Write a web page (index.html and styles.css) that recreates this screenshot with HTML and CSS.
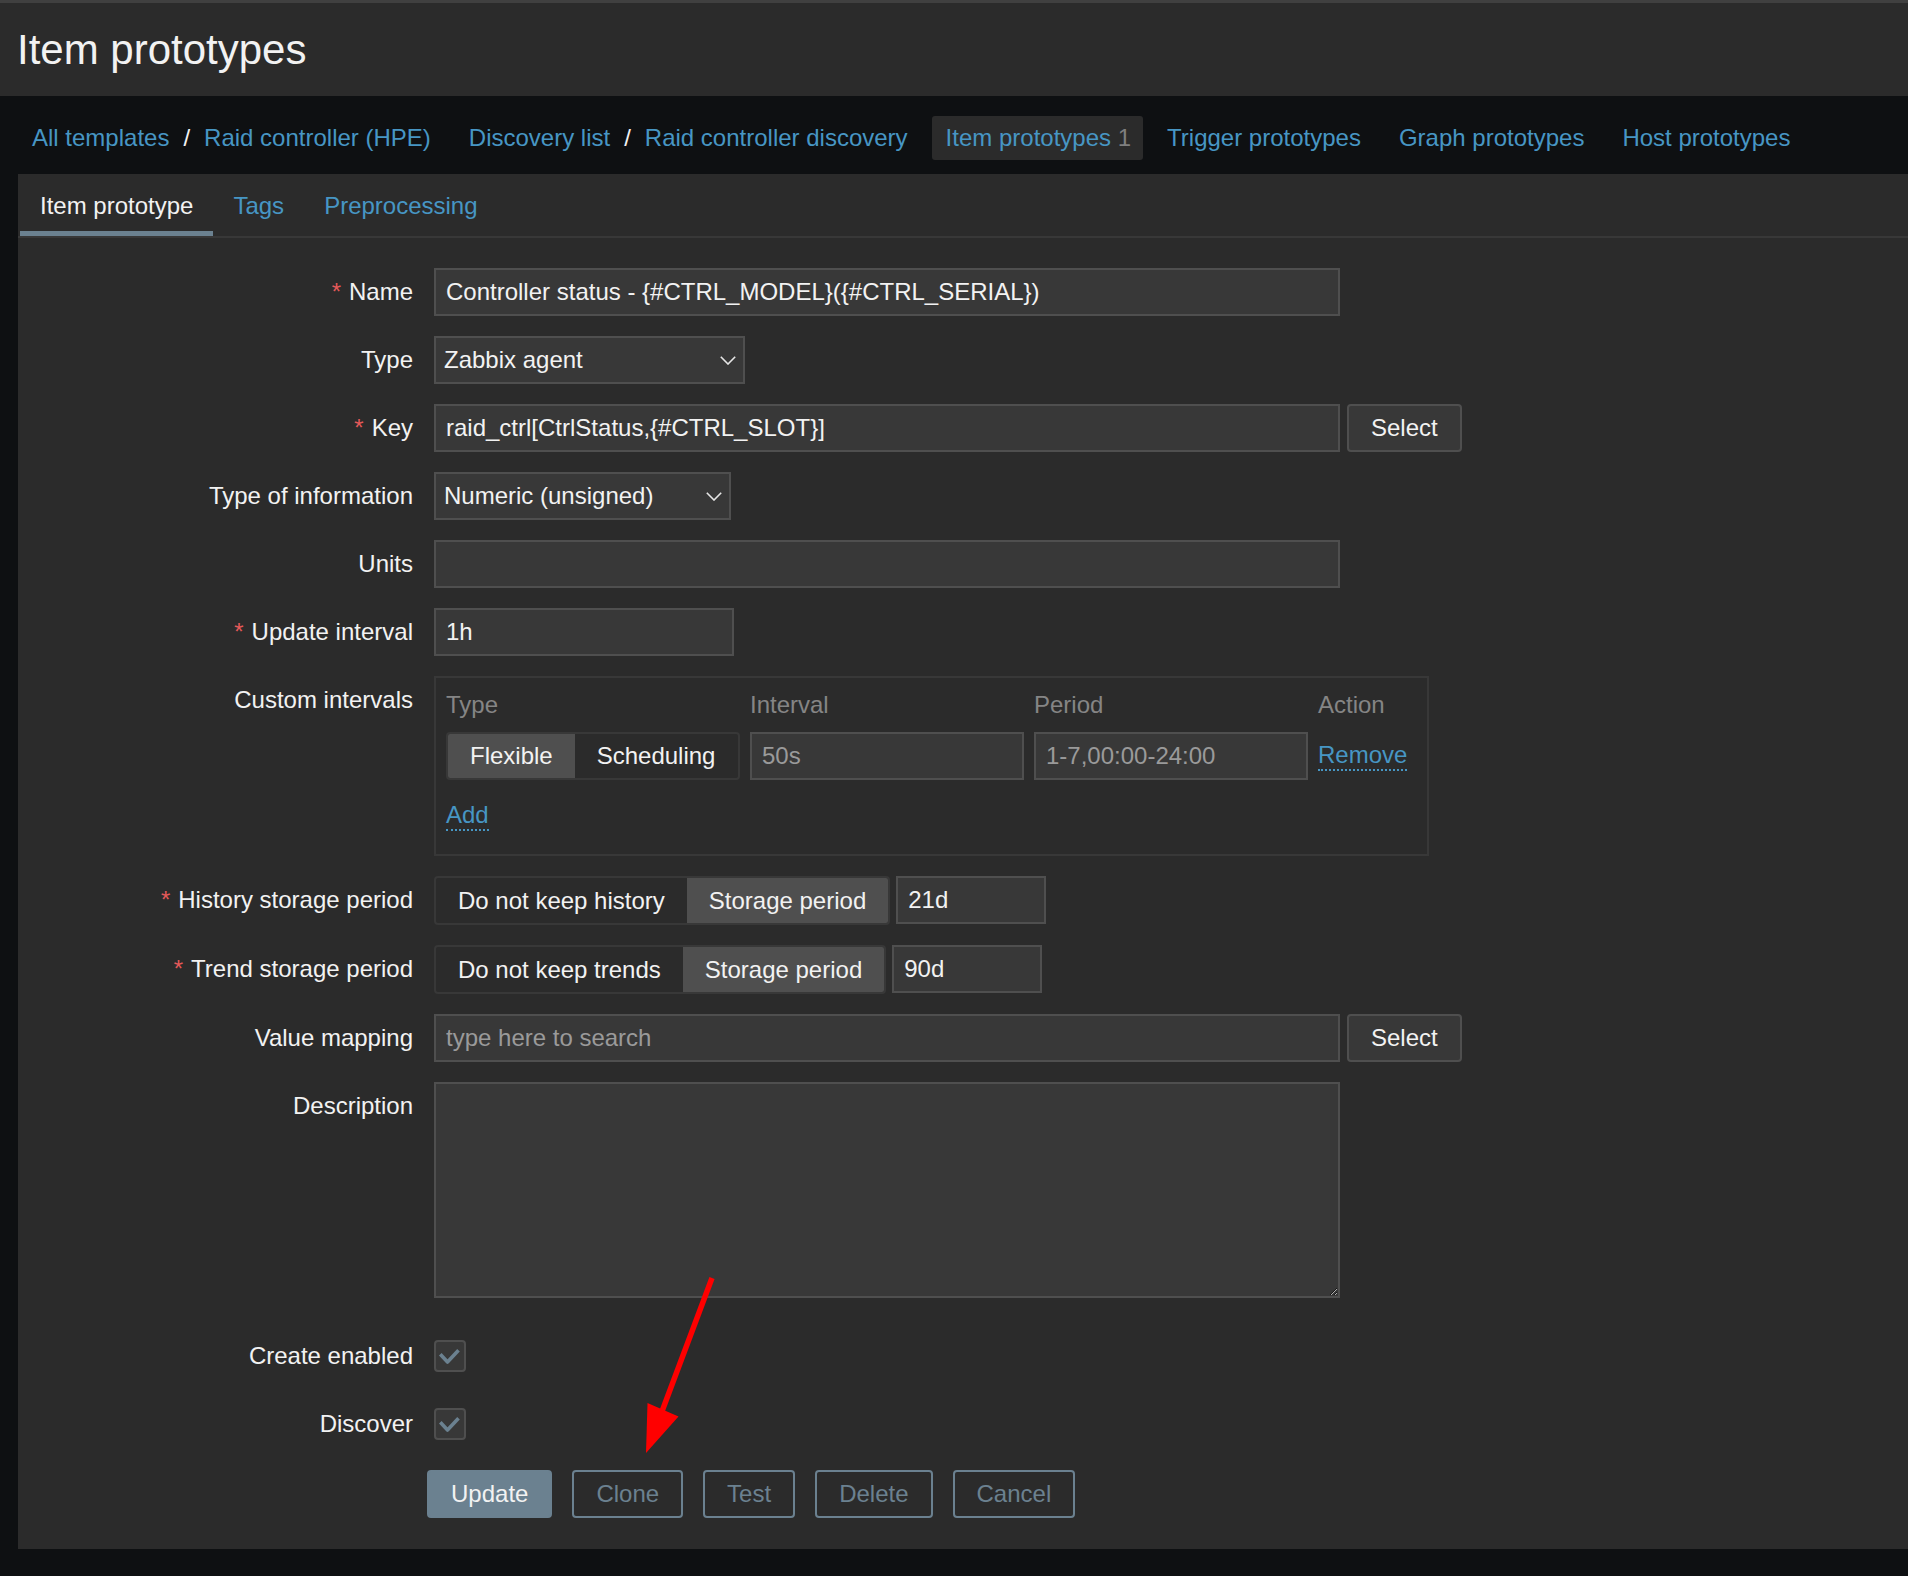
FILE: index.html
```html
<!DOCTYPE html>
<html lang="en">
<head>
<meta charset="utf-8">
<title>Item prototypes</title>
<link rel="stylesheet" href="styles.css">
</head>
<body>
<header class="page-header">
  <h1 class="page-title">Item prototypes</h1>
</header>

<nav class="crumbs">
  <ul class="crumb-list">
    <li><a href="#">All templates</a><span class="crumb-sep">/</span><a href="#">Raid controller (HPE)</a></li>
    <li><a href="#">Discovery list</a><span class="crumb-sep">/</span><a href="#">Raid controller discovery</a></li>
    <li class="is-current"><a href="#">Item prototypes</a> <span class="count">1</span></li>
    <li><a href="#">Trigger prototypes</a></li>
    <li><a href="#">Graph prototypes</a></li>
    <li><a href="#">Host prototypes</a></li>
  </ul>
</nav>

<main class="panel">
  <ul class="tabs">
    <li class="tab is-active">Item prototype</li>
    <li class="tab"><a href="#">Tags</a></li>
    <li class="tab"><a href="#">Preprocessing</a></li>
  </ul>

  <form class="form-grid">
    <div class="form-label required">Name</div>
    <div class="field"><input class="text-input w-wide" type="text" value="Controller status - {#CTRL_MODEL}({#CTRL_SERIAL})"></div>

    <div class="form-label">Type</div>
    <div class="field">
      <div class="select w-type"><span>Zabbix agent</span><svg viewBox="0 0 16 9" width="16" height="9"><polyline points="0.8,0.8 8,8 15.2,0.8" fill="none" stroke="#e6e6e6" stroke-width="1.6"/></svg></div>
    </div>

    <div class="form-label required">Key</div>
    <div class="field"><input class="text-input w-wide" type="text" value="raid_ctrl[CtrlStatus,{#CTRL_SLOT}]"><button type="button" class="btn-select">Select</button></div>

    <div class="form-label">Type of information</div>
    <div class="field">
      <div class="select w-info"><span>Numeric (unsigned)</span><svg viewBox="0 0 16 9" width="16" height="9"><polyline points="0.8,0.8 8,8 15.2,0.8" fill="none" stroke="#e6e6e6" stroke-width="1.6"/></svg></div>
    </div>

    <div class="form-label">Units</div>
    <div class="field"><input class="text-input w-wide" type="text" value=""></div>

    <div class="form-label required">Update interval</div>
    <div class="field"><input class="text-input w-interval" type="text" value="1h"></div>

    <div class="form-label">Custom intervals</div>
    <div class="field">
      <div class="intervals">
        <div class="iv-grid">
          <div class="iv-head">Type</div>
          <div class="iv-head">Interval</div>
          <div class="iv-head">Period</div>
          <div class="iv-head">Action</div>
          <div class="radio-list"><span class="on">Flexible</span><span>Scheduling</span></div>
          <input class="text-input w-full" type="text" placeholder="50s">
          <input class="text-input w-full" type="text" placeholder="1-7,00:00-24:00">
          <div><a href="#" class="dotted-link">Remove</a></div>
        </div>
        <div class="iv-add"><a href="#" class="dotted-link">Add</a></div>
      </div>
    </div>

    <div class="form-label required">History storage period</div>
    <div class="field field-tight">
      <div class="radio-list tall"><span>Do not keep history</span><span class="on">Storage period</span></div>
      <input class="text-input w-small" type="text" value="21d">
    </div>

    <div class="form-label required">Trend storage period</div>
    <div class="field field-tight">
      <div class="radio-list tall"><span>Do not keep trends</span><span class="on">Storage period</span></div>
      <input class="text-input w-small" type="text" value="90d">
    </div>

    <div class="form-label">Value mapping</div>
    <div class="field"><input class="text-input w-wide" type="text" placeholder="type here to search"><button type="button" class="btn-select">Select</button></div>

    <div class="form-label">Description</div>
    <div class="field"><textarea class="textarea"></textarea></div>

    <div class="form-label cb-row">Create enabled</div>
    <div class="field cb-row"><span class="checkbox"><svg viewBox="0 0 28 28" width="28" height="28"><polyline points="4.3,12.3 11.5,20 22.5,8.3" fill="none" stroke="#6b8190" stroke-width="3.6" stroke-linejoin="round"/></svg></span></div>

    <div class="form-label">Discover</div>
    <div class="field"><span class="checkbox"><svg viewBox="0 0 28 28" width="28" height="28"><polyline points="4.3,12.3 11.5,20 22.5,8.3" fill="none" stroke="#6b8190" stroke-width="3.6" stroke-linejoin="round"/></svg></span></div>

    <div class="actions">
      <button type="button" class="btn btn-primary">Update</button>
      <button type="button" class="btn">Clone</button>
      <button type="button" class="btn">Test</button>
      <button type="button" class="btn">Delete</button>
      <button type="button" class="btn">Cancel</button>
    </div>
  </form>
</main>

<svg class="annotation" width="1908" height="1576" viewBox="0 0 1908 1576">
  <line x1="712" y1="1278" x2="661" y2="1414" stroke="#ff0000" stroke-width="5.5"/>
  <polygon points="647.5,1403 678.5,1416.5 646,1453" fill="#ff0000"/>
</svg>
</body>
</html>
```

FILE: styles.css
```css
* {
  box-sizing: border-box;
}

html,
body {
  margin: 0;
}

body {
  position: relative;
  background: #0e1012;
  color: #f2f2f2;
  font-family: "Liberation Sans", Arial, sans-serif;
  font-size: 24px;
  padding-bottom: 27px;
}

a {
  color: #4796c4;
  text-decoration: none;
}

/* Header */
.page-header {
  background: #2b2b2b;
  border-top: 3px solid #404040;
  padding: 23px 17px 22px;
}

.page-title {
  margin: 0;
  font-size: 42px;
  line-height: 48px;
  font-weight: normal;
}

/* Breadcrumb navigation */
.crumbs {
  padding: 20px 0 14px 18px;
}

.crumb-list {
  list-style: none;
  margin: 0;
  padding: 0;
  display: flex;
  gap: 10px;
}

.crumb-list li {
  line-height: 44px;
  padding: 0 14px;
  white-space: nowrap;
}

.crumb-list li.is-current {
  background: #2b2b2b;
  border-radius: 3px;
  padding-right: 12px;
}

.crumb-sep {
  margin: 0 14px;
  color: #f2f2f2;
}

.count {
  color: #7f7f7f;
}

/* Panel */
.panel {
  margin-left: 18px;
  background: #2b2b2b;
  padding-bottom: 31px;
}

.tabs {
  list-style: none;
  margin: 0;
  padding: 0 0 0 2px;
  display: flex;
  border-bottom: 2px solid #383838;
}

.tab {
  padding: 8px 20px 1px;
  line-height: 48px;
  border-bottom: 5px solid transparent;
  white-space: nowrap;
}

.tab.is-active {
  border-bottom-color: #6b8190;
  color: #f2f2f2;
}

/* Form */
.form-grid {
  display: grid;
  grid-template-columns: 395px 1fr;
  column-gap: 21px;
  row-gap: 20px;
  padding-top: 30px;
}

.form-label {
  text-align: right;
  line-height: 48px;
  white-space: nowrap;
}

.form-label.required::before {
  content: "*";
  color: #e45959;
  margin-right: 8px;
}

.field {
  display: flex;
  align-items: flex-start;
  gap: 7px;
}

.field-tight {
  gap: 6px;
}

.cb-row {
  margin-top: 14px;
}

.text-input {
  height: 48px;
  margin: 0;
  padding: 0 10px;
  border: 2px solid #4f4f4f;
  background: #383838;
  color: #f2f2f2;
  font-family: "Liberation Sans", Arial, sans-serif;
  font-size: 24px;
  outline: none;
}

.text-input::placeholder {
  color: #9a9a9a;
  opacity: 1;
}

.w-wide {
  width: 906px;
}

.w-interval {
  width: 300px;
}

.w-small {
  width: 150px;
}

.w-full {
  width: 100%;
}

.select {
  display: flex;
  align-items: center;
  justify-content: space-between;
  height: 48px;
  padding: 0 7px 0 8px;
  border: 2px solid #4f4f4f;
  background: #383838;
  white-space: nowrap;
}

.select svg {
  display: block;
}

.w-type {
  width: 311px;
}

.w-info {
  width: 297px;
}

.btn-select {
  height: 48px;
  margin: 0;
  padding: 0 22px;
  border: 2px solid #4f4f4f;
  border-radius: 4px;
  background: #383838;
  color: #f2f2f2;
  font-family: "Liberation Sans", Arial, sans-serif;
  font-size: 24px;
}

/* Custom intervals */
.intervals {
  width: 995px;
  border: 2px solid #383838;
  padding: 3px 10px 14px;
}

.iv-grid {
  display: grid;
  grid-template-columns: 294px 274px 274px auto;
  column-gap: 10px;
  row-gap: 3px;
  align-items: center;
}

.iv-head {
  line-height: 48px;
  color: #858585;
}

.iv-add {
  margin-top: 12px;
  height: 48px;
  display: flex;
  align-items: center;
}

.dotted-link {
  display: inline-block;
  line-height: normal;
  border-bottom: 2px dotted #4796c4;
}

/* Segmented radio */
.radio-list {
  display: flex;
  height: 48px;
  border: 2px solid #383838;
  border-radius: 4px;
  background: #2b2b2b;
  white-space: nowrap;
  overflow: hidden;
}

.radio-list.tall {
  height: 49px;
}

.radio-list span {
  display: flex;
  align-items: center;
  padding: 0 22px;
}

.radio-list .on {
  background: #4f4f4f;
}

/* Textarea */
.textarea {
  display: block;
  width: 906px;
  height: 216px;
  margin: 0;
  border: 2px solid #4f4f4f;
  background: #383838;
  color: #f2f2f2;
  font-family: "Liberation Sans", Arial, sans-serif;
  font-size: 24px;
  resize: vertical;
  outline: none;
}

/* Checkbox */
.checkbox {
  display: block;
  width: 32px;
  height: 32px;
  margin-top: 8px;
  border: 2px solid #4f4f4f;
  border-radius: 4px;
  background: #383838;
}

.checkbox svg {
  display: block;
}

/* Buttons */
.actions {
  grid-column: 2;
  display: flex;
  gap: 20px;
  margin: 2px 0 0 -7px;
}

.btn {
  height: 48px;
  margin: 0;
  padding: 0 22px;
  border: 2px solid #6b8190;
  border-radius: 4px;
  background: transparent;
  color: #6b8190;
  font-family: "Liberation Sans", Arial, sans-serif;
  font-size: 24px;
}

.btn-primary {
  background: #6b8190;
  color: #f2f2f2;
}

/* Annotation arrow */
.annotation {
  position: absolute;
  left: 0;
  top: 0;
  pointer-events: none;
}
```
